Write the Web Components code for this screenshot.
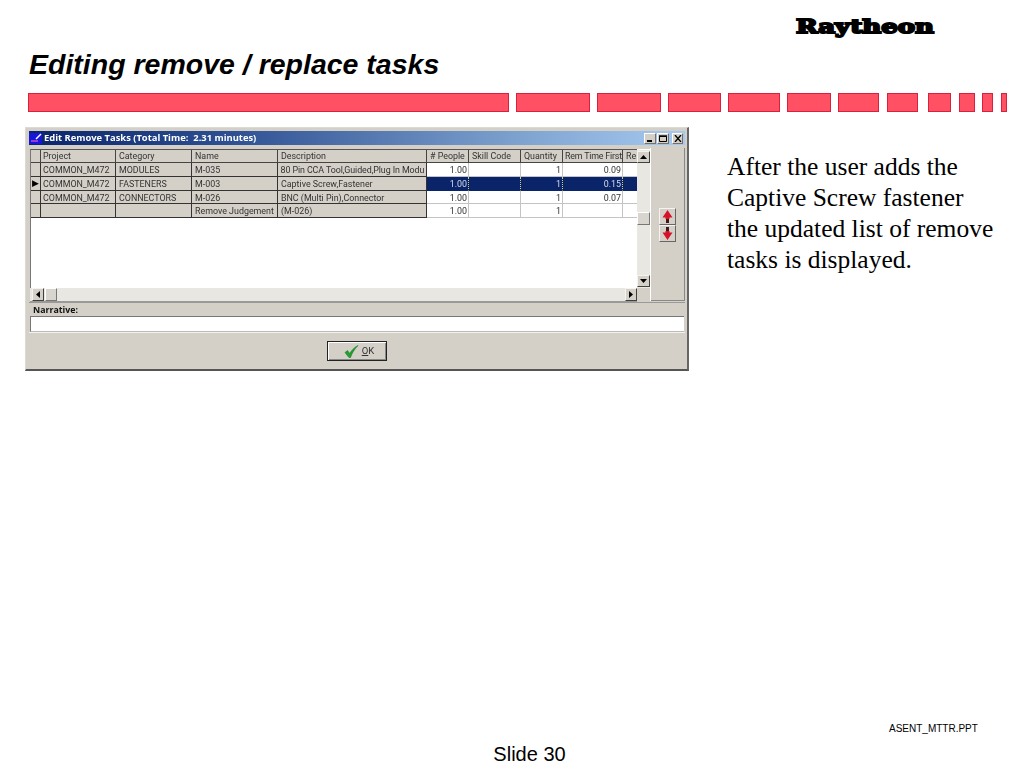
<!DOCTYPE html>
<html lang="en"><head><meta charset="utf-8"><title>Editing remove / replace tasks</title>
<style>html,body{margin:0;padding:0;background:#fff}</style></head>
<body>
<x-slide>
  <x-logo></x-logo>
  <x-title>Editing remove / replace tasks</x-title>
  <x-segbar></x-segbar>
  <x-main>
    <x-window caption="Edit Remove Tasks (Total Time:&nbsp; 2.31 minutes)">
      <x-datagrid slot="grid"></x-datagrid>
      <x-arrows slot="side"></x-arrows>
      <x-okbutton slot="action">OK</x-okbutton>
    </x-window>
    <x-note>After the user adds the Captive Screw fastener the updated list of remove tasks is displayed.</x-note>
  </x-main>
  <x-foot></x-foot>
</x-slide>
<script>
function def(name, css, html, init){
  customElements.define(name, class extends HTMLElement{
    connectedCallback(){
      if(this.shadowRoot) return;
      const r=this.attachShadow({mode:'open'});
      r.innerHTML='<style>'+css+'</style>'+(typeof html==='function'?html(this):html);
      if(init) init(r,this);
    }
  });
}
def('x-slide',':host{display:flex;flex-direction:column;width:1024px;height:768px;overflow:hidden;background:#fff;position:relative}','<slot></slot>');
def('x-logo',':host{display:block;height:30px;padding:10px 0 0 795px}svg{display:block}',
 `<svg width="142" height="30" viewBox="0 0 142 30"><text x="1" y="22.500" font-family="'DejaVu Serif'" font-weight="700" font-size="19" textLength="138" lengthAdjust="spacingAndGlyphs" fill="#000" stroke="#000" stroke-width="1.9">Raytheon</text></svg>`);
def('x-title',`:host{display:block;margin:8px 0 0 29px;height:33px;font:italic 700 28.5px/33px "Liberation Sans",sans-serif;color:#000;white-space:nowrap}`,'<slot></slot>');
def('x-segbar',':host{display:flex;margin:12px 0 0 28px;height:19px}i{display:block;flex:none;height:19px;box-sizing:border-box;background:#ff5064;border:1px solid #d8213f}',
 ()=>[[481,0],[74,7],[64,7],[53,7],[52,7],[44,7],[41,7],[31,8],[23,10],[16,8],[11,7],[6,8]].map(w=>`<i style="width:${w[0]}px;margin-left:${w[1]}px"></i>`).join(''));
def('x-main',':host{display:flex;align-items:flex-start;margin:15px 0 0 25px}','<slot></slot>');
def('x-note',`:host{display:block;width:270px;margin:24px 0 0 38px;font:25.5px/31px "Liberation Serif",serif;color:#000}`,'<slot></slot>');
def('x-foot',`:host{display:flex;flex-direction:column;margin-top:auto;font-family:"Liberation Sans",sans-serif;color:#000}
 .f{font-size:10px;line-height:13px;padding-left:889px}.s{font-size:20px;line-height:22px;text-align:center;padding:8px 0 3px 35px}`,
 '<div class="f">ASENT_MTTR.PPT</div><div class="s">Slide 30</div>');

def('x-window',`:host{display:flex;flex-direction:column;flex:none;width:664px;height:244px;box-sizing:border-box;padding:3px 2px 2px 3px;background:#d4d0c8;
   border-style:solid;border-width:1px 2px 2px 1px;border-color:#dcdad4 #666 #555 #dcdad4;font-family:"Liberation Sans",sans-serif;filter:blur(.3px)}
 .t{height:14px;flex:none;display:flex;align-items:center;background:linear-gradient(90deg,#0a246a 0,#2d4f92 30%,#7ea3cf 75%,#a6caf0 100%);color:#fff;font:700 9.4px/14px "Open Sans",sans-serif;white-space:pre}
 .t svg{flex:none;margin:0}
 .t span{flex:1;padding-left:1px}
 .c{display:flex;margin-right:2px}
 .c b{display:flex;align-items:center;justify-content:center;width:12px;height:11px;box-sizing:border-box;background:#d4d0c8;border:1px solid;border-color:#fff #707070 #707070 #fff}
 .c b+b{margin-left:1px}.c b:last-child{margin-left:3px;width:11px}
 .b{display:flex;flex:none;height:153px;margin:4px 0 0 1px}
 .g{display:block;width:620px;flex:none}
 .side{flex:1;display:flex;justify-content:center;box-shadow:inset 1px 0 #fff,inset -1px 0 #888,inset 0 -1px #888;padding-top:60px;box-sizing:border-box;height:153px;margin-top:-1px}
 .n{height:14px;flex:none;font:700 8.8px/15px "Open Sans",sans-serif;color:#111;padding-left:4px;border-top:1px solid #999;box-sizing:border-box}
 .i{height:16px;flex:none;margin:0 1px 0 1px;background:#fff;box-sizing:border-box;border-top:1px solid #777;border-left:1px solid #777;border-bottom:1px solid #bbb}
 .a{flex:1;display:flex;justify-content:center;padding-top:9px;box-shadow:inset 0 1px #f2f1ed;box-sizing:border-box}`,
 h=>`<div class="t"><svg width="14" height="13" viewBox="0 0 14 13"><rect x="0" y="1" width="13" height="11" fill="#1616d8"/><rect x="2" y="8" width="7" height="2" fill="#9a3ad0"/><path d="M7 7 12 2" stroke="#fff" stroke-width="1.5"/></svg><span>${h.getAttribute('caption')}</span><div class="c">
   <b><svg width="8" height="7"><rect x="1" y="5" width="5" height="2" fill="#000"/></svg></b>
   <b><svg width="8" height="7"><path d="M.5 1.500h7v5h-7z" fill="none" stroke="#000"/><path d="M0 1h8" stroke="#000" stroke-width="1.4"/></svg></b>
   <b><svg width="8" height="7"><path d="M1 0 7 7M7 0 1 7" stroke="#000" stroke-width="1.3"/></svg></b></div></div>
  <div class="b"><div class="g"><slot name="grid"></slot></div><div class="side"><slot name="side"></slot></div></div>
  <div class="n">Narrative:</div><div class="i"></div>
  <div class="a"><slot name="action"></slot></div>`);

const cols=[11,75,76,86,149,42,52,42,60,14];
const head=['','Project','Category','Name','Description','# People','Skill Code','Quantity','Rem Time First','Re'];
const rows=[
 ['','COMMON_M472','MODULES','M-035','80 Pin CCA Tool,Guided,Plug In Modu','1.00','','1','0.09',''],
 ['▶','COMMON_M472','FASTENERS','M-003','Captive Screw,Fastener','1.00','','1','0.15',''],
 ['','COMMON_M472','CONNECTORS','M-026','BNC (Multi Pin),Connector','1.00','','1','0.07',''],
 ['','','','Remove Judgement','(M-026)','1.00','','1','','']];
def('x-datagrid',`:host{display:grid;grid-template-columns:1fr 13px;grid-template-rows:139px 14px;width:620px;height:153px;font:8.9px/13px Roboto,"Liberation Sans",sans-serif;color:#333}
 .v{background:#fff;border-left:1px solid #777;border-top:1px solid #555;box-sizing:border-box;overflow:hidden}
 .d{display:grid;grid-template-columns:${cols.map((c,i)=>i?c+'px':(c-1)+'px').join(' ')};grid-template-rows:13px 14px 14px 13px 14px}
 .d div{box-sizing:border-box;overflow:hidden;white-space:nowrap;padding:1px 0 0 3px;border-right:1px solid #333;border-bottom:1px solid #333;background:#d4d0c8}
 .d .p{padding-left:2px}
 .d .w{background:#fff;border-color:#c4c4c4;text-align:right;padding:1px 1px 0 0}
 .d .h{border-color:#444;text-align:left;padding:0 0 0 3px}
 .d .h.p{padding-left:2px}
 .d .h.x{letter-spacing:-.2px;padding-left:2px}
 .d .z{letter-spacing:-.09px;padding-left:2.500px}
 .d .s{background:#0a246a;color:#d8dcea;border-right:1px dotted #d8d27a;border-bottom:1px solid #0a246a}
 .d .k{padding:0;font-size:9px;line-height:13px;color:#000;text-align:center}
 .d .last{border-right:0}
 .sv{background:#e9e7e2;display:flex;flex-direction:column;border-top:1px solid #fff;box-sizing:border-box;padding-top:1px}
 .sh{background:#e9e7e2;display:flex;align-items:flex-start;border-bottom:1px solid #999;box-sizing:border-box;padding-left:2px;grid-column:1;height:14px}
 .bt{flex:none;box-sizing:border-box;width:13px;height:12px;background:#d4d0c8;border:1px solid;border-color:#f4f3ef #404040 #404040 #f4f3ef;display:flex;align-items:center;justify-content:center}
 .sh .bt{width:12px;height:13px}.th{flex:none;box-sizing:border-box;background:#d8d5ce;border:1px solid;border-color:#fff #777 #777 #fff}
 .corner{background:#d4d0c8;grid-column:2;grid-row:2}`,
 ()=>{
  let cells=head.map((t,i)=>`<div class="h${i==1?' p':''}${i==8?' x':''}${i==9?' last':''}">${t}</div>`).join('');
  rows.forEach((r,ri)=>{r.forEach((t,i)=>{
    let c=[]; if(i>=5){c.push('w'); if(ri==1)c.push('s');}
    if(i==0)c.push('k'); if(i==1)c.push('p'); if(i==4&&ri==0)c.push('z'); if(i==9)c.push('last');
    cells+=`<div class="${c.join(' ')}">${t}</div>`;});});
  return `<div class="v"><div class="d">${cells}</div></div>
  <div class="sv"><div class="bt"><svg width="7" height="4"><path d="M3.500 0 7 4H0z"/></svg></div>
    <div style="height:49px"></div><div class="th" style="height:13px"></div><div style="height:50px"></div>
    <div class="bt"><svg width="7" height="4"><path d="M0 0h7L3.500 4z"/></svg></div></div>
  <div class="sh"><div class="bt"><svg width="4" height="7"><path d="M4 0v7L0 3.500z"/></svg></div><div class="th" style="width:12px;height:13px;margin-left:1px"></div><div style="flex:1"></div><div class="bt"><svg width="4" height="7"><path d="M0 0v7l4-3.500z"/></svg></div></div>
  <div class="corner"></div>`;});
def('x-arrows',`:host{display:flex;flex-direction:column}
 b{display:flex;width:17px;height:17px;box-sizing:border-box;align-items:center;justify-content:center;background:#d4d0c8;border:1px solid;border-color:#f4f3ef #666 #666 #f4f3ef}`,
 `<b><svg width="11" height="13" viewBox="0 0 11 13"><rect x="4" y="8" width="3" height="5" fill="#3a1a1a"/><path d="M5.500 0 10.500 7.500H7.500V9H3.500V7.500H.5z" fill="#d8102a"/></svg></b>
  <b><svg width="11" height="13" viewBox="0 0 11 13"><rect x="4" y="0" width="3" height="5" fill="#3a1a1a"/><path d="M3.500 4H7.500V5.500H10.500L5.500 13 .5 5.500H3.500z" fill="#d8102a"/></svg></b>`);
def('x-okbutton',`:host{display:flex;align-items:center;justify-content:center;width:60px;height:20px;box-sizing:border-box;background:#d4d0c8;border:1px solid #222;box-shadow:inset 1px 1px #fff,inset -1px -1px #888;font:9.5px/14px Roboto,"Liberation Sans",sans-serif;color:#333;padding-left:4px}
  svg{margin-right:3px} u{text-decoration:underline}`,
 `<svg width="15" height="13" viewBox="0 0 15 13"><path d="M1 7.500 3.500 5.500 5.700 8.500C7.500 5.500 10 2.500 14 .5 10.500 4 8 8 6.500 12.500H5z" fill="#22a030" stroke="#108020" stroke-width=".6"/></svg><span><u>O</u>K</span>`);
</script>
</body></html>
